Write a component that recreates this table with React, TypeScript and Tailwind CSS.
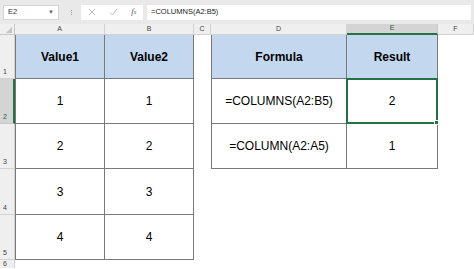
import { FC, ReactNode } from "react";

// corner + A..E, F takes the rest
const colWidths = [15, 90, 89, 17, 136, 91];
const cols = ["A", "B", "C", "D", "E", "F"];
const rowHeights = [44, 45, 45, 46, 45];

type CellProps = {
  children?: ReactNode;
  className?: string;
};

const Cell: FC<CellProps> = ({ children, className = "" }) => (
  <div className={`flex items-center justify-center text-[12px] text-black ${className}`}>{children}</div>
);

const FormulaBar: FC = () => (
  <div className="flex h-[24px] items-center bg-[#e9e9e9] px-[3px] text-[7.5px] text-[#333]">
    <div className="flex h-[15px] w-[56px] items-center justify-between border border-[#d6d6d6] bg-white px-[4px]">
      <span>E2</span>
      <span className="text-[6px] text-[#666]">▼</span>
    </div>
    <div className="ml-[8px] flex w-[8px] flex-col items-center gap-[1px]">
      <span className="h-[1px] w-[1px] bg-[#999]" />
      <span className="h-[1px] w-[1px] bg-[#999]" />
      <span className="h-[1px] w-[1px] bg-[#999]" />
    </div>
    <div className="ml-[6px] flex h-[15px] w-[62px] items-center justify-around bg-white text-[#bbb]">
      <svg width="8" height="8" viewBox="0 0 8 8">
        <path d="M1 1 L7 7 M7 1 L1 7" stroke="#b5b5b5" strokeWidth="0.9" />
      </svg>
      <svg width="9" height="8" viewBox="0 0 9 8">
        <path d="M1 4.5 L3.5 7 L8 1" stroke="#b5b5b5" strokeWidth="0.9" fill="none" />
      </svg>
      <span className="font-['Liberation_Serif',serif] text-[9px] italic text-[#666]">
        f<span className="text-[6px]">x</span>
      </span>
    </div>
    <div className="ml-[4px] flex h-[15px] flex-1 items-center bg-white px-[4px] text-[#222]">=COLUMNS(A2:B5)</div>
  </div>
);

export default function App() {
  const tmplCols = colWidths.map((w) => `${w}px`).join(" ") + " 1fr";
  const leftData = ["1", "2", "3", "4"];

  return (
    <div className="h-[269px] w-[474px] overflow-hidden bg-white font-['Liberation_Sans',Arial,sans-serif]">
      <FormulaBar />
      <div
        className="grid"
        style={{
          gridTemplateColumns: tmplCols,
          gridTemplateRows: `11px ${rowHeights.map((h) => `${h}px`).join(" ")} 1fr`,
        }}
      >
        {/* column headers */}
        <div className="relative border-b border-r border-[#c8c8c8] bg-[#efefef]">
          <svg className="absolute bottom-[1px] right-[2px]" width="6" height="6" viewBox="0 0 6 6">
            <path d="M6 0 L6 6 L0 6 Z" fill="#c4c4c4" />
          </svg>
        </div>
        {cols.map((c) =>
          c === "E" ? (
            <div
              key={c}
              className="flex items-center justify-center border-b-2 border-r border-b-[#217346] border-r-[#c8c8c8] bg-[#d4d4d4] text-[7px] text-[#1e5e3a]"
            >
              {c}
            </div>
          ) : (
            <div
              key={c}
              className={`flex items-center border-b border-r border-[#d2d2d2] bg-[#efefef] text-[7px] text-[#444] ${
                c === "F" ? "w-[36px] justify-center" : "justify-center"
              }`}
            >
              {c}
            </div>
          )
        )}

        {/* row 1: headers */}
        <div className="flex items-end border-b border-r border-[#d2d2d2] bg-[#efefef] pb-[1px] pl-[3px] text-[7px] text-[#444]">1</div>
        <Cell className="border-b border-l border-r border-[#7a7a7a] bg-[#c3d8ef] font-bold">Value1</Cell>
        <Cell className="border-b border-r border-[#7a7a7a] bg-[#c3d8ef] font-bold">Value2</Cell>
        <div />
        <Cell className="border-b border-l border-r border-[#7a7a7a] bg-[#c3d8ef] font-bold">Formula</Cell>
        <Cell className="border-b border-r border-[#7a7a7a] bg-[#c3d8ef] font-bold">Result</Cell>
        <div />

        {leftData.map((v, i) => {
          const row = i + 2;
          const selected = row === 2;
          return (
            <div key={row} className="contents">
              <div
                className={`flex items-end border-b pb-[1px] pl-[3px] text-[7px] ${
                  selected
                    ? "border-r-2 border-b-[#c8c8c8] border-r-[#217346] bg-[#d4d4d4] text-[#1e5e3a]"
                    : "border-r border-[#d2d2d2] bg-[#efefef] text-[#444]"
                }`}
              >
                {row}
              </div>
              <Cell className="border-b border-l border-r border-[#7a7a7a]">{v}</Cell>
              <Cell className="border-b border-r border-[#7a7a7a]">{v}</Cell>
              <div />
              {row === 2 && (
                <>
                  <Cell className="border-b border-l border-r border-[#7a7a7a]">=COLUMNS(A2:B5)</Cell>
                  <div className="relative -ml-px -mt-px flex items-center justify-center border-2 border-[#217346] text-[12px] text-black">
                    2
                    <span className="absolute -bottom-[3px] -right-[3px] h-[5px] w-[5px] border border-white bg-[#217346]" />
                  </div>
                </>
              )}
              {row === 3 && (
                <>
                  <Cell className="border-b border-l border-r border-[#7a7a7a]">=COLUMN(A2:A5)</Cell>
                  <Cell className="border-b border-r border-[#7a7a7a]">1</Cell>
                </>
              )}
              {row > 3 && (
                <>
                  <div />
                  <div />
                </>
              )}
              <div />
            </div>
          );
        })}

        <div className="flex items-start border-r border-[#d2d2d2] bg-[#efefef] pl-[3px] text-[7px] leading-[8px] text-[#444]">6</div>
      </div>
    </div>
  );
}
